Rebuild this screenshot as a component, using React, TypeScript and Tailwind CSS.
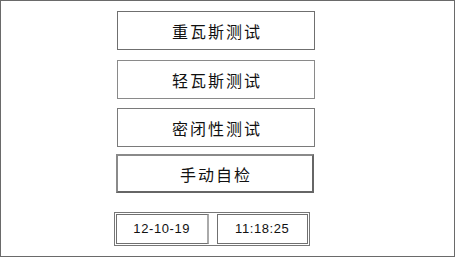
const menu = [
  { label: '重瓦斯测试', cls: 'mt-[10px] ml-[116px] border border-[#6f6f6f]' },
  { label: '轻瓦斯测试', cls: 'mt-[10px] ml-[116px] border border-[#8a8a8a]' },
  { label: '密闭性测试', cls: 'mt-[9px] ml-[116px] border border-[#7a7a7a]' },
  { label: '手动自检', cls: 'mt-[7px] ml-[115px] border-2 border-[#8a8a8a] border-r-[#666] border-b-[#666]' },
];

export default function App() {
  return (
    <div className="flex h-[257px] w-[455px] flex-col border border-[#6a6a6a] bg-white text-[#111]">
      {menu.map((m) => (
        <button
          key={m.label}
          className={`${m.cls} flex h-[39px] w-[198px] items-center justify-center bg-white pl-[2px] text-[16px] tracking-[2px] [font-family:'Noto_Sans_CJK_SC',sans-serif]`}
        >
          {m.label}
        </button>
      ))}
      <div className="mt-[19px] ml-[113px] flex h-[34px] w-[196px] gap-[8px] border border-[#777] p-[1px] text-[13px] tracking-[0.6px] [font-family:'Liberation_Sans',sans-serif]">
        <div className="flex flex-1 items-center justify-center border border-r-2 border-[#707070] border-r-[#aaa]">12-10-19</div>
        <div className="flex flex-1 items-center justify-center border border-[#707070]">11:18:25</div>
      </div>
    </div>
  );
}
